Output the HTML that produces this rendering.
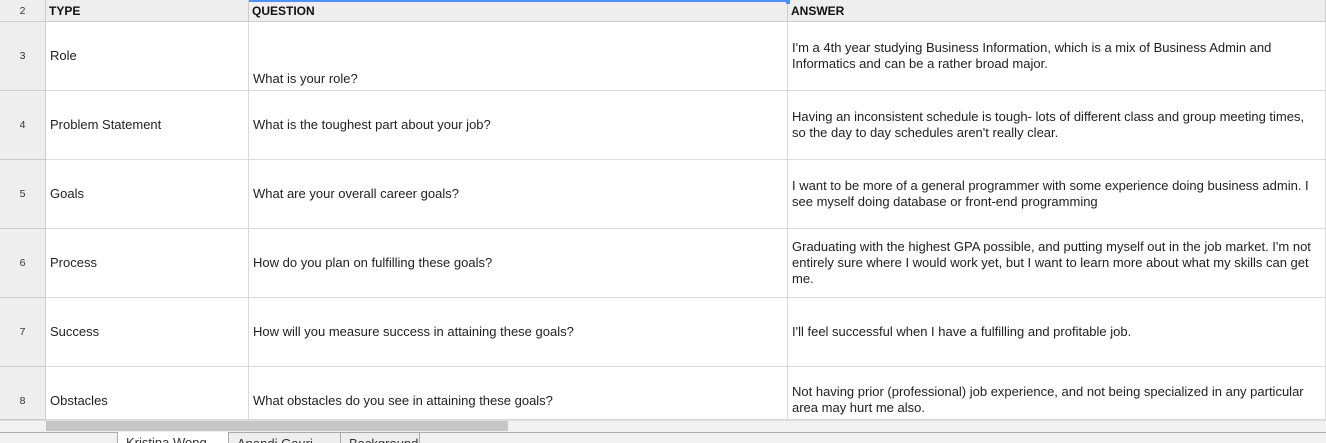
<!DOCTYPE html>
<html><head><meta charset="utf-8"><style>
*{margin:0;padding:0;box-sizing:border-box}
body{width:1326px;height:443px;overflow:hidden;background:#fff;font-family:"Liberation Sans",Arial,sans-serif;font-size:12px;color:#222;position:relative}
.a{position:absolute}
.cell{position:absolute;border-right:1px solid #d9d9d9;border-bottom:1px solid #d9d9d9;padding:0 3px 0 4px;display:flex;align-items:center;line-height:16px;color:#1f1f1f;font-size:13px}
.ans{padding-right:8px}
.rn{position:absolute;left:0;width:46px;background:#eee;border-right:1px solid #ccc;border-bottom:1px solid #ccc;display:flex;align-items:center;justify-content:center;font-size:10.5px;color:#333}
.hd{position:absolute;top:0;height:22px;background:#eee;border-right:1px solid #ccc;border-bottom:1px solid #ccc;font-weight:bold;font-size:12px;padding:4px 3px 0 3px;color:#111}
.tab{position:absolute;top:432px;height:11px;border-left:1px solid #aaa;border-right:1px solid #aaa;font-size:13px;padding:4px 0 0 8px;line-height:13px;overflow:hidden;color:#333}
</style></head><body>
<div class="rn" style="top:0;height:22px">2</div>
<div class="hd" style="left:46px;width:203px">TYPE</div>
<div class="hd" style="left:249px;width:539px">QUESTION</div>
<div class="hd" style="left:788px;width:538px">ANSWER</div>
<div class="a" style="left:249px;top:0;width:538px;height:2px;background:#4d90fe"></div>
<div class="a" style="left:786px;top:0;width:4px;height:4px;background:#4d90fe"></div>

<div class="rn" style="top:22px;height:69px">3</div>
<div class="cell" style="left:46px;top:22px;width:203px;height:69px">Role</div>
<div class="cell" style="left:249px;top:22px;width:539px;height:69px;align-items:flex-end;padding-bottom:3px">What is your role?</div>
<div class="cell ans" style="left:788px;top:22px;width:538px;height:69px">I'm a 4th year studying Business Information, which is a mix of Business Admin and Informatics and can be a rather broad major.</div>

<div class="rn" style="top:91px;height:69px">4</div>
<div class="cell" style="left:46px;top:91px;width:203px;height:69px">Problem Statement</div>
<div class="cell" style="left:249px;top:91px;width:539px;height:69px">What is the toughest part about your job?</div>
<div class="cell ans" style="left:788px;top:91px;width:538px;height:69px">Having an inconsistent schedule is tough- lots of different class and group meeting times, so the day to day schedules aren't really clear.</div>

<div class="rn" style="top:160px;height:69px">5</div>
<div class="cell" style="left:46px;top:160px;width:203px;height:69px">Goals</div>
<div class="cell" style="left:249px;top:160px;width:539px;height:69px">What are your overall career goals?</div>
<div class="cell ans" style="left:788px;top:160px;width:538px;height:69px">I want to be more of a general programmer with some experience doing business admin. I see myself doing database or front-end programming</div>

<div class="rn" style="top:229px;height:69px">6</div>
<div class="cell" style="left:46px;top:229px;width:203px;height:69px">Process</div>
<div class="cell" style="left:249px;top:229px;width:539px;height:69px">How do you plan on fulfilling these goals?</div>
<div class="cell ans" style="left:788px;top:229px;width:538px;height:69px">Graduating with the highest GPA possible, and putting myself out in the job market. I'm not entirely sure where I would work yet, but I want to learn more about what my skills can get me.</div>

<div class="rn" style="top:298px;height:69px">7</div>
<div class="cell" style="left:46px;top:298px;width:203px;height:69px">Success</div>
<div class="cell" style="left:249px;top:298px;width:539px;height:69px">How will you measure success in attaining these goals?</div>
<div class="cell ans" style="left:788px;top:298px;width:538px;height:69px">I'll feel successful when I have a fulfilling and profitable job.</div>

<div class="rn" style="top:367px;height:53px;padding-top:16px">8</div>
<div class="cell" style="left:46px;top:367px;width:203px;height:53px;padding-top:16px">Obstacles</div>
<div class="cell" style="left:249px;top:367px;width:539px;height:53px;padding-top:16px">What obstacles do you see in attaining these goals?</div>
<div class="cell ans" style="left:788px;top:367px;width:538px;height:53px;align-items:flex-end;padding-bottom:3px">Not having prior (professional) job experience, and not being specialized in any particular area may hurt me also.</div>

<div class="a" style="left:0;top:420px;width:1326px;height:12px;background:#f1f1f1;border-top:1px solid #ddd"></div>
<div class="a" style="left:46px;top:421px;width:462px;height:10px;background:#c6c6c6"></div>
<div class="a" style="left:0;top:432px;width:1326px;height:11px;background:#f1f1f1;border-top:1px solid #aaa"></div>
<div class="tab" style="left:117px;width:112px;background:#fff;top:432px;border-top:none">Kristina Wong</div>
<div class="tab" style="left:228px;width:113px;background:#eee;border-top:1px solid #aaa">Anandi Gauri</div>
<div class="tab" style="left:340px;width:80px;background:#eee;border-top:1px solid #aaa">Background</div>
</body></html>
